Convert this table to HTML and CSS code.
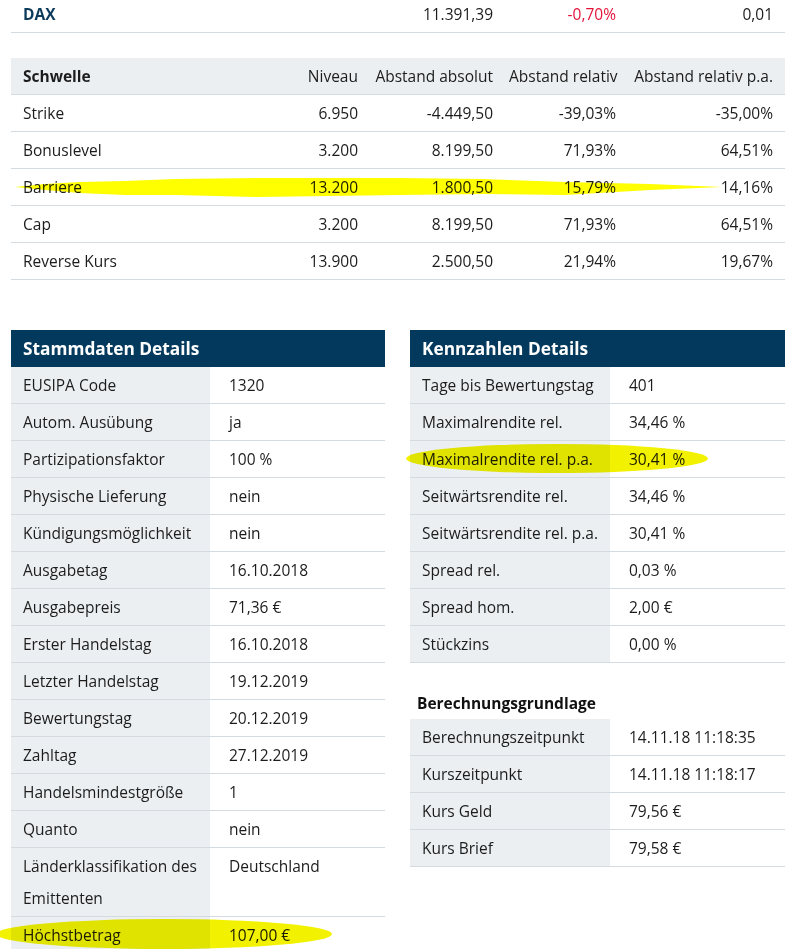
FILE: index.html
```html
<!DOCTYPE html>
<html lang="de">
<head>
<meta charset="utf-8">
<title>Schwellen und Details</title>
<link rel="stylesheet" href="styles.css">
</head>
<body>
<div class="page">
  <div class="levels">
    <div class="lrow dax-row">
      <div class="cell dax">DAX</div>
      <div class="cell num"></div>
      <div class="cell num">11.391,39</div>
      <div class="cell num neg">-0,70%</div>
      <div class="cell num">0,01</div>
    </div>
    <div class="lrow head">
      <div class="cell strong">Schwelle</div>
      <div class="cell num">Niveau</div>
      <div class="cell num">Abstand absolut</div>
      <div class="cell num">Abstand relativ</div>
      <div class="cell num">Abstand relativ p.a.</div>
    </div>
    <div class="lrow">
      <div class="cell">Strike</div>
      <div class="cell num">6.950</div>
      <div class="cell num">-4.449,50</div>
      <div class="cell num">-39,03%</div>
      <div class="cell num">-35,00%</div>
    </div>
    <div class="lrow">
      <div class="cell">Bonuslevel</div>
      <div class="cell num">3.200</div>
      <div class="cell num">8.199,50</div>
      <div class="cell num">71,93%</div>
      <div class="cell num">64,51%</div>
    </div>
    <div class="lrow">
      <div class="cell">Barriere</div>
      <div class="cell num">13.200</div>
      <div class="cell num">1.800,50</div>
      <div class="cell num">15,79%</div>
      <div class="cell num">14,16%</div>
    </div>
    <div class="lrow">
      <div class="cell">Cap</div>
      <div class="cell num">3.200</div>
      <div class="cell num">8.199,50</div>
      <div class="cell num">71,93%</div>
      <div class="cell num">64,51%</div>
    </div>
    <div class="lrow">
      <div class="cell">Reverse Kurs</div>
      <div class="cell num">13.900</div>
      <div class="cell num">2.500,50</div>
      <div class="cell num">21,94%</div>
      <div class="cell num">19,67%</div>
    </div>
  </div>

  <div class="panels">
    <div class="panel">
      <div class="panel-head">Stammdaten Details</div>
      <div class="drow"><div class="lbl">EUSIPA Code</div><div class="val">1320</div></div>
      <div class="drow"><div class="lbl">Autom. Ausübung</div><div class="val">ja</div></div>
      <div class="drow"><div class="lbl">Partizipationsfaktor</div><div class="val">100 %</div></div>
      <div class="drow"><div class="lbl">Physische Lieferung</div><div class="val">nein</div></div>
      <div class="drow"><div class="lbl">Kündigungsmöglichkeit</div><div class="val">nein</div></div>
      <div class="drow"><div class="lbl">Ausgabetag</div><div class="val">16.10.2018</div></div>
      <div class="drow"><div class="lbl">Ausgabepreis</div><div class="val">71,36 €</div></div>
      <div class="drow"><div class="lbl">Erster Handelstag</div><div class="val">16.10.2018</div></div>
      <div class="drow"><div class="lbl">Letzter Handelstag</div><div class="val">19.12.2019</div></div>
      <div class="drow"><div class="lbl">Bewertungstag</div><div class="val">20.12.2019</div></div>
      <div class="drow"><div class="lbl">Zahltag</div><div class="val">27.12.2019</div></div>
      <div class="drow"><div class="lbl">Handelsmindestgröße</div><div class="val">1</div></div>
      <div class="drow"><div class="lbl">Quanto</div><div class="val">nein</div></div>
      <div class="drow"><div class="lbl">Länderklassifikation des Emittenten</div><div class="val">Deutschland</div></div>
      <div class="drow"><div class="lbl">Höchstbetrag</div><div class="val">107,00 €</div></div>
    </div>

    <div class="panel">
      <div class="panel-head">Kennzahlen Details</div>
      <div class="drow"><div class="lbl">Tage bis Bewertungstag</div><div class="val">401</div></div>
      <div class="drow"><div class="lbl">Maximalrendite rel.</div><div class="val">34,46 %</div></div>
      <div class="drow"><div class="lbl">Maximalrendite rel. p.a.</div><div class="val">30,41 %</div></div>
      <div class="drow"><div class="lbl">Seitwärtsrendite rel.</div><div class="val">34,46 %</div></div>
      <div class="drow"><div class="lbl">Seitwärtsrendite rel. p.a.</div><div class="val">30,41 %</div></div>
      <div class="drow"><div class="lbl">Spread rel.</div><div class="val">0,03 %</div></div>
      <div class="drow"><div class="lbl">Spread hom.</div><div class="val">2,00 €</div></div>
      <div class="drow"><div class="lbl">Stückzins</div><div class="val">0,00 %</div></div>

      <div class="sub-head">Berechnungsgrundlage</div>
      <div class="drow"><div class="lbl">Berechnungszeitpunkt</div><div class="val">14.11.18 11:18:35</div></div>
      <div class="drow"><div class="lbl">Kurszeitpunkt</div><div class="val">14.11.18 11:18:17</div></div>
      <div class="drow"><div class="lbl">Kurs Geld</div><div class="val">79,56 €</div></div>
      <div class="drow"><div class="lbl">Kurs Brief</div><div class="val">79,58 €</div></div>
    </div>
  </div>
</div>

<svg class="marks" width="803" height="949" viewBox="0 0 803 949" aria-hidden="true">
  <polygon class="ink" points="15,187 45,184 80,182 125,181 175,179 257,178 400,178 483,179 565,182 650,184 722,187 650,190 565,195 483,194 400,195 257,197 175,195 125,195 80,193 45,190"/>
  <ellipse class="ink soft" cx="557" cy="458.5" rx="151" ry="14.5"/>
  <ellipse class="ink soft" cx="164" cy="934" rx="168" ry="15"/>
</svg>
</body>
</html>
```

FILE: styles.css
```css
* {
  box-sizing: border-box;
}

html, body {
  margin: 0;
  padding: 0;
  background: #ffffff;
}

body {
  font-family: "Open Sans", "Liberation Sans", sans-serif;
  font-size: 15.5px;
  color: #1c1c1c;
  width: 803px;
  height: 949px;
  overflow: hidden;
  position: relative;
}

.page {
  padding-left: 11px;
  width: 785px;
}

/* top levels table */
.levels {
  width: 774px;
}

.lrow {
  display: grid;
  grid-template-columns: 279px 80px 135px 123px 157px;
  border-bottom: 1px solid #d3dbe1;
}

.cell {
  padding: 2px 12px;
  line-height: 32px;
  white-space: nowrap;
}

.num {
  text-align: right;
  padding-left: 4px;
}

.dax-row .cell {
  padding-top: 0;
  padding-bottom: 4px;
  line-height: 28px;
}

.dax {
  color: #0b3a5b;
  font-weight: 700;
}

.neg {
  color: #e4123a;
}

.head {
  margin-top: 25px;
  background: #eceff2;
}

.strong {
  font-weight: 700;
}

/* detail panels */
.panels {
  margin-top: 50px;
  display: grid;
  grid-template-columns: 374px 375px;
  column-gap: 25px;
  align-items: start;
}

.panel-head {
  background: #02395c;
  color: #ffffff;
  font-weight: 700;
  font-size: 17.3px;
  line-height: 37px;
  height: 37px;
  padding: 0 12px;
}

.drow {
  display: grid;
  grid-template-columns: 199px 1fr;
  border-bottom: 1px solid #d3dbe1;
}

.panel + .panel .drow {
  grid-template-columns: 200px 1fr;
}

.lbl {
  background: #eceff2;
  padding: 2px 4px 2px 12px;
  line-height: 32px;
}

.val {
  padding: 2px 12px 2px 19px;
  line-height: 32px;
}

.sub-head {
  font-weight: 700;
  color: #111111;
  margin-top: 29px;
  margin-bottom: 5px;
  padding-left: 7px;
  line-height: 22px;
}

/* highlighter annotations */
.marks {
  position: absolute;
  top: 0;
  left: 0;
  pointer-events: none;
  mix-blend-mode: multiply;
}

.ink {
  fill: #ffff00;
}

.soft {
  fill: #f2f200;
}
```
